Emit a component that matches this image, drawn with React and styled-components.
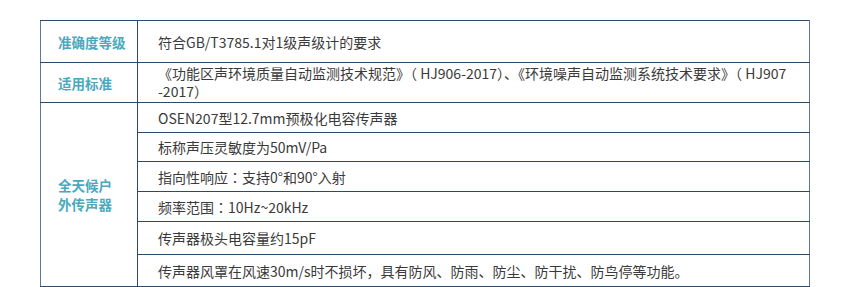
import React from "react";
import styled, { createGlobalStyle } from "styled-components";

const GlobalStyle = createGlobalStyle`
  body {
    margin: 0;
    background: #ffffff;
    font-family: "Noto Sans CJK SC", "Noto Sans", sans-serif;
  }
`;

const rows = [
  "OSEN207型12.7mm预极化电容传声器",
  "标称声压灵敏度为50mV/Pa",
  "指向性响应：支持0°和90°入射",
  "频率范围：10Hz~20kHz",
  "传声器极头电容量约15pF",
  "传声器风罩在风速30m/s时不损坏，具有防风、防雨、防尘、防干扰、防鸟停等功能。",
];
const rowHeights = [30, 29, 30, 30, 33, 32];

// fullwidth colon drawn centred, as in the reference
const withColon = (text) =>
  text.split("：").flatMap((part, i) =>
    i === 0 ? [part] : [<Colon key={i}>：</Colon>, part]
  );

export default function App() {
  return (
    <>
      <GlobalStyle />
      <Wrapper>
        <SpecTable>
          <colgroup>
            <col style={{ width: 97 }} />
            <col />
          </colgroup>
          <tbody>
            <Row $h={42}>
              <Label>准确度等级</Label>
              <Value>符合GB/T3785.1对1级声级计的要求</Value>
            </Row>
            <Row $h={40}>
              <Label>适用标准</Label>
              <Value $top>
                《功能区声环境质量自动监测技术规范》（ HJ906-2017）、《环境噪声自动监测系统技术要求》（ HJ907
                <br />
                -2017）
              </Value>
            </Row>
            {rows.map((text, i) => (
              <Row $h={rowHeights[i]} key={i}>
                {i === 0 && (
                  <Label rowSpan={rows.length} $lh={19}>
                    全天候户
                    <br />
                    外传声器
                  </Label>
                )}
                <Value>{withColon(text)}</Value>
              </Row>
            ))}
          </tbody>
        </SpecTable>
      </Wrapper>
    </>
  );
}

const Wrapper = styled.div`
  padding: 20px 0 0 40px;
`;

const SpecTable = styled.table`
  width: 770px;
  border-collapse: collapse;
  table-layout: fixed;
  border-left: 1px solid #5b7899;
  border-right: 1px solid #5b7899;
  border-top: 1px solid #2d4a6e;
  border-bottom: 1px solid #2d4a6e;
`;

const Row = styled.tr`
  height: ${(p) => p.$h}px;
`;

const Label = styled.td`
  border: 1px solid #2d4a6e;
  border-left-color: #5b7899;
  padding: 0 0 0 17px;
  color: #4aa9bd;
  font-weight: 700;
  font-size: 13.5px;
  line-height: ${(p) => p.$lh || 18}px;
  vertical-align: middle;
  white-space: nowrap;
`;

const Value = styled.td`
  border: 1px solid #2d4a6e;
  border-right-color: #5b7899;
  padding: ${(p) => (p.$top ? "1px 0 0 20px" : "0 0 0 20px")};
  color: #3a3a3a;
  font-size: 14px;
  line-height: 18px;
  vertical-align: ${(p) => (p.$top ? "top" : "middle")};
  white-space: nowrap;
`;

const Colon = styled.span`
  font-family: "Noto Sans CJK TC", "Noto Sans CJK SC", sans-serif;
`;
